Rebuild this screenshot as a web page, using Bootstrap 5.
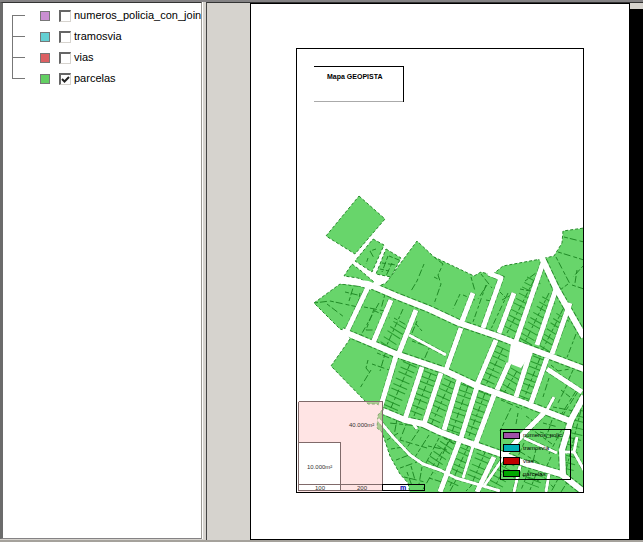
<!DOCTYPE html>
<html lang="es">
<head>
<meta charset="utf-8">
<meta name="viewport" content="width=device-width, initial-scale=1">
<title>Mapa GEOPISTA</title>
<link href="https://cdn.jsdelivr.net/npm/bootstrap@5.3.0/dist/css/bootstrap.min.css" rel="stylesheet">
<style>
body{background:#d6d3ce;font-family:"Liberation Sans",Arial,sans-serif;font-size:11px;line-height:15px;color:#000}
.workspace{border-top:2px solid #848284;border-bottom:2px solid #a5a29c}
.layer-panel{flex:0 0 202px;background:#fff;border:1px solid #848284;border-left:3px solid #6b6b6b;border-top-color:#333;border-right:1px solid #9c9a94;box-shadow:1px 0 0 #fff;margin-bottom:1px}
.layer-tree{margin:2px 0 0 9px;padding:0;list-style:none}
.layer-tree li{height:21px;position:relative;white-space:nowrap}
.layer-tree li::before{content:"";width:13px;height:1px;background:#777;flex:none}
.layer-tree li::after{content:"";position:absolute;left:0;top:-10px;width:1px;height:21px;background:#777}
.layer-tree li:first-child::after{display:none}
.swatch{width:10px;height:10px;border:1px solid #777;margin-left:15px;flex:none}
.sw-num{background:#ca8fd2}.sw-tra{background:#63d0d3}.sw-via{background:#dc6063}.sw-par{background:#63cf63}
.tick{appearance:none;width:12px;height:12px;margin:0 0 0 9px;border:1px solid #d6d3ce;border-top:2px solid #666;border-left:2px solid #666;background:#fff;flex:none}
.tick:checked{background:#fff url("data:image/svg+xml,%3Csvg xmlns='http://www.w3.org/2000/svg' viewBox='0 0 9 9'%3E%3Cpath d='M1 4L3.5 6.5L8 2' fill='none' stroke='%23222' stroke-width='2'/%3E%3C/svg%3E") center/9px 9px no-repeat}
.layer-tree label{margin-left:3px}
.view{background:#d6d3ce;border-left:1px solid #444;border-top:1px solid #333;margin-left:4px;padding-left:43px}
.paper{background:#fff;border:1px solid #000;padding:44px 45px}
.paper-shadow{flex:0 0 13px;background:#000;margin-top:6px}
.sheet{display:block;width:100%;height:auto}
.land{fill:#68d56b;stroke:#268a2b;stroke-width:1;stroke-dasharray:3 2}
.curb{fill:none;stroke:#268a2b;stroke-dasharray:3 2 5 2}
.road{fill:none;stroke:#fff;stroke-linejoin:round}
.w6{stroke-width:6}.w5{stroke-width:5}.w3{stroke-width:3}
.curb.w6{stroke-width:8}.curb.w5{stroke-width:6}.curb.w3{stroke-width:4}
.lots{fill:none;stroke:#289c2e;stroke-width:15;stroke-dasharray:1 5 1 4 1 6}
.spine{fill:none;stroke:#208a26;stroke-width:1;stroke-dasharray:6 2 3 3}
.parcel{fill:none;stroke:#208a26;stroke-width:1;stroke-dasharray:4 2 7 3}
.frame-line{fill:none;stroke:#000;stroke-width:1;shape-rendering:crispEdges}
.title-base{fill:none;stroke:#aaa;stroke-width:1;shape-rendering:crispEdges}
.thin-line{fill:none;stroke:#806a6a;stroke-width:1;shape-rendering:crispEdges}
.key-box{stroke:#000;stroke-width:1;shape-rendering:crispEdges}
.map-title{font-size:7px;font-weight:bold}
.map-note{font-size:6px;fill:#333}
.map-unit{font-size:7px;font-weight:bold;fill:#00a}
.map-key{font-size:6px}
</style>
<script src="https://cdn.jsdelivr.net/npm/bootstrap@5.3.0/dist/js/bootstrap.bundle.min.js"></script>
</head>
<body>
<div class="workspace d-flex min-vh-100">
<aside class="layer-panel overflow-hidden" aria-label="Capas">
<ul class="layer-tree">
<li class="d-flex align-items-center"><span class="swatch sw-num"></span><input class="tick" type="checkbox" id="l1"><label for="l1">numeros_policia_con_join</label></li>
<li class="d-flex align-items-center"><span class="swatch sw-tra"></span><input class="tick" type="checkbox" id="l2"><label for="l2">tramosvia</label></li>
<li class="d-flex align-items-center"><span class="swatch sw-via"></span><input class="tick" type="checkbox" id="l3"><label for="l3">vias</label></li>
<li class="d-flex align-items-center"><span class="swatch sw-par"></span><input class="tick" type="checkbox" id="l4" checked><label for="l4">parcelas</label></li>
</ul>
</aside>
<main class="view d-flex flex-grow-1">
<div class="paper flex-grow-1">
<svg class="sheet" viewBox="296 48 288 445" role="img" aria-label="Mapa GEOPISTA">
<defs>
<clipPath id="sheetClip"><rect x="297" y="49" width="286" height="443"/></clipPath>
<clipPath id="landClip"><path d="M386 283L417 241L434 257L474 276L481 272L492 275L503 266L541 259L554 256L562 243L563 231L584 228V493H410L408 483L400 474L390 456L382 432L377 428L378 415L384 408L377 404H368L331 366L350 339L346 331L340 329L314 303L340 284L356 285L370 290Z"/></clipPath>
<path id="rowsA" d="M379 303L361 335M403 309L386 347M486 285L473 322M508 293L491 329M534 280L507 333M549 293L525 342M563 309L543 349M576 334L566 360"/>
<path id="rowsB" d="M503 348L486 385M517 371L504 393M540 358L523 401M410 364L390 410M431 373L414 416M451 381L431 425M468 386L452 432M485 393L469 436"/>
<path id="rowsC" d="M469 444L450 486M486 450L470 488M450 440L430 470M581 410L566 470M508 462L494 488M536 474L530 490"/>
<path id="roads6" d="M337 280L368 284L396 296L429 309L459 323L497 336L520 345L547 355L584 369M342 331L373 344L396 354L443 370L477 386L524 403L570 421M383 411L405 420L423 424L440 432L461 440L501 454L524 463L561 474L584 492M584 396L571 420L562 450L563 475M541 256L556 288L584 337M422 423L431 428"/>
<path id="roads5" d="M368 287L346 333M391 300L373 343M416 310L399 353M461 328L446 370M496 340L477 385M509 363L497 390M531 350L516 397M547 358L531 403M473 293L461 324M488 273L501 278L483 328M514 293L499 333M543 263L516 341M556 289L537 345M570 303L552 354M396 356L380 409M422 367L405 419M441 373L424 424M459 380L444 430M477 387L461 438M494 395L476 443M544 413L527 430L505 454M459 442L440 492M494 457L477 492M547 369L582 392"/>
<path id="roads3" d="M409 335L446 355M554 397L547 410M474 443L463 478M504 457L484 486M520 466L514 492M549 474L546 492M378 419L393 437L410 455L423 464L440 470L456 478L500 491M524 438L557 453M577 437L574 452L584 470M562 452H574M417 429L412 422"/>
</defs>
<rect x="296" y="48" width="288" height="445" fill="#fff"/>
<g clip-path="url(#sheetClip)">
<path class="land" d="M359 196L385 219L355 254L326 236ZM373 239L384 245L372 272L355 261ZM386 249L401 258L391 277L376 274ZM352 264L360 270L374 282L371 284L358 278L344 276Z"/>
<path class="land" d="M386 283L417 241L434 257L474 276L481 272L492 275L503 266L541 259L554 256L562 243L563 231L584 228V493H410L408 483L400 474L390 456L382 432L377 428L378 415L384 408L377 404H368L331 366L350 339L346 331L340 329L314 303L340 284L356 285L370 290Z"/>
<g clip-path="url(#landClip)">
<use href="#rowsB" class="lots"/><use href="#rowsC" class="lots"/>
<use href="#rowsA" class="spine"/><use href="#rowsB" class="spine"/><use href="#rowsC" class="spine"/>
<path class="lots" d="M534 280L507 333M549 300L525 342M563 317L543 349M400 325L386 347"/>
<path class="parcel" d="M314 303L330 301L358 307M327 304L344 317M345 292L362 296M349 301L353 288M360 293L358 304M364 307L385 311M374 309L366 330H374M385 294L381 309M424 264L417 281L411 291M434 257L443 264L438 275L441 284L434 304M434 277L440 280M471 277L475 291M460 294L453 309M463 295L475 300M481 274L492 288M487 285L478 299M486 300L496 302M502 300L513 294M500 292L506 298M525 281L540 270M520 289L535 292M564 237L584 242M558 252L584 260M556 257L570 284M584 265L573 277M568 284L560 290M572 285L584 289M577 270L575 283M368 360L366 368L370 373M371 370L360 388M372 364L395 372M385 354L380 371M377 353L392 359M430 346L423 362M412 341L426 346M417 321L412 333M416 324L422 331M375 311L390 318M394 318L410 327M551 365L558 371L570 369M573 370L568 381M549 378L543 397M561 390L570 397M567 385L558 403M577 393L563 415M553 407L574 411M561 415L576 391M511 408L500 431M501 400L522 409M518 413L516 424M526 416L533 421M543 423L558 427M552 420L545 441M530 428L552 444M540 432L565 440M562 429L549 454M524 443L516 461M536 449L532 466M551 457L545 470M514 448L547 468M529 470L521 490M540 473L554 488M558 479L551 492M568 481L561 492M419 426L389 423M397 419L394 436M407 422L400 440M419 430L406 449M429 435L415 457M439 438L425 465M448 442L436 470M387 440L400 432M391 449L403 447M396 460L409 455M400 468L417 462M407 472L412 486M411 466L415 480M422 467L419 484M433 472L422 491M404 477L425 482M429 478L445 483M447 476L438 491M456 480L450 491M472 485L466 491M444 438L454 444M428 446L447 450M400 440L427 448M508 475L517 479M522 475L539 481"/>
<use href="#roads6" class="curb w6"/><use href="#roads5" class="curb w5"/><use href="#roads3" class="curb w3"/>
</g>
<path class="parcel" d="M376 249L370 251L374 258M368 258L366 264M388 256L382 272M382 263L396 265M389 256L399 260M392 263L386 276M380 269L389 271"/>
<use href="#roads3" class="road w3"/><use href="#roads5" class="road w5"/><use href="#roads6" class="road w6"/>
<path fill="#fff" d="M511 343L535 349L530 355L521 368L508 363Z"/>
</g>
<rect x="298" y="401" width="84" height="91" fill="#ffc4c4" fill-opacity=".45"/>
<rect x="298" y="443" width="42" height="48" fill="#fff"/>
<path class="thin-line" d="M298.500 401.500H382.500V491M298.500 401.500V490.500M298.500 442.500H340.500V491M298.500 484.500H382.500M298.500 490.500H382.500"/>
<path class="frame-line" d="M382.500 484.500H424.500V490.500H382.500Z"/>
<rect class="frame-line" x="296.500" y="48.500" width="287" height="444"/>
<path class="title-base" d="M314 101.500H403"/>
<path class="frame-line" d="M314 66.500H403.500V102"/>
<text class="map-title" x="327" y="79">Mapa GEOPISTA</text>
<text class="map-note" x="349" y="427">40.000m²</text>
<text class="map-note" x="307" y="469">10.000m²</text>
<text class="map-note" x="315" y="490">100</text>
<text class="map-note" x="357" y="490">200</text>
<text class="map-unit" x="400" y="490">m</text>
<rect class="frame-line" x="500.500" y="429.500" width="70" height="50"/>
<g class="key-box"><rect x="503.500" y="432.500" width="16" height="6" fill="#a050a8"/><rect x="503.500" y="444.500" width="16" height="7" fill="#00b0b8"/><rect x="503.500" y="457.500" width="16" height="7" fill="#c00000"/><rect x="503.500" y="470.500" width="16" height="6" fill="#00a800"/></g>
<g class="map-key"><text x="523" y="437">numeros_polic</text><text x="523" y="450">tramosvia</text><text x="523" y="463">vias</text><text x="523" y="476">parcelas</text></g>
</svg>
</div>
<div class="paper-shadow"></div>
</main>
</div>
</body>
</html>
